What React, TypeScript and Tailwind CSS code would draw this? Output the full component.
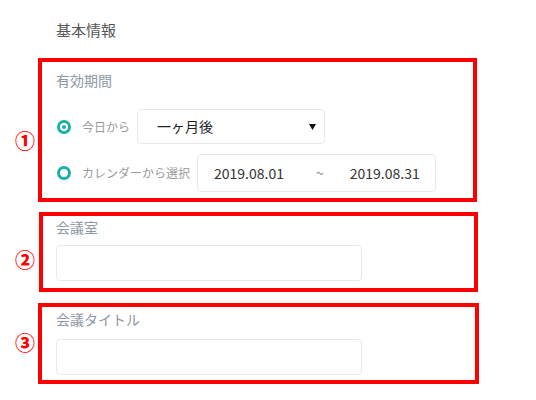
import React from "react";

const FONT = "font-['Noto_Sans_CJK_JP','Noto_Sans',sans-serif]";

/* teal radio dot */
function Radio({ checked }: { checked: boolean }) {
  return (
    <span className="flex h-[14px] w-[14px] items-center justify-center rounded-full border-[3px] border-[#1bb0a5]">
      {checked && <span className="h-[4px] w-[4px] rounded-full bg-[#1bb0a5]" />}
    </span>
  );
}

function Marker({ n, top }: { n: string; top: string }) {
  return (
    <span className={`absolute left-[15px] ${top} text-[20px] leading-[22px] font-black text-[#ff0000]`}>{n}</span>
  );
}

export default function App() {
  return (
    <div className={`relative h-[400px] w-[536px] overflow-hidden bg-white ${FONT}`}>
      <div className="pl-[56px] pt-[19px] text-[15px] leading-[22px] text-[#555]">基本情報</div>

      {/* validity period */}
      <div className="ml-[38px] mt-[17px] h-[144px] w-[439px] border-4 border-[#ff0000] pl-[14px] pt-[8px]">
        <div className="text-[14px] leading-[20px] text-[#8c98a4]">有効期間</div>
        <div className="mt-[19px] flex items-center">
          <div className="flex w-[81px] items-center pl-[1px]">
            <Radio checked />
            <span className="ml-[11px] text-[12px] leading-[18px] text-[#9a9a9a]">今日から</span>
          </div>
          <div className="flex h-[35px] w-[188px] items-center justify-between rounded-[4px] border border-[#e6eaef] pl-[19px] pr-[8px]">
            <span className="text-[14px] text-[#222]">一ヶ月後</span>
            <svg width="7" height="6" viewBox="0 0 7 6">
              <path d="M0 0h7L3.5 6z" fill="#111" />
            </svg>
          </div>
        </div>
        <div className="mt-[10px] flex items-center">
          <div className="flex w-[141px] items-center pl-[1px]">
            <Radio checked={false} />
            <span className="ml-[11px] whitespace-nowrap text-[12px] leading-[18px] text-[#9a9a9a]">カレンダーから選択</span>
          </div>
          <div className="flex h-[38px] w-[239px] items-center rounded-[4px] border border-[#e6eaef] pl-[16px] text-[14px] text-[#333]">
            <span>2019.08.01</span>
            <span className="ml-[32px] text-[#888]">~</span>
            <span className="ml-[26px]">2019.08.31</span>
          </div>
        </div>
      </div>

      {/* meeting room */}
      <div className="ml-[39px] mt-[10px] h-[80px] w-[439px] border-4 border-[#ff0000] pl-[13px] pt-[1px]">
        <div className="text-[14px] leading-[20px] text-[#8c98a4]">会議室</div>
        <div className="mt-[8px] h-[36px] w-[306px] rounded-[4px] border border-[#e6eaef]" />
      </div>

      {/* meeting title */}
      <div className="ml-[38px] mt-[11px] h-[81px] w-[441px] border-4 border-[#ff0000] pl-[14px] pt-[2px]">
        <div className="text-[14px] leading-[20px] text-[#8c98a4]">会議タイトル</div>
        <div className="mt-[10px] h-[36px] w-[306px] rounded-[4px] border border-[#e6eaef]" />
      </div>

      <Marker n="①" top="top-[130px]" />
      <Marker n="②" top="top-[249px]" />
      <Marker n="③" top="top-[332px]" />
    </div>
  );
}
